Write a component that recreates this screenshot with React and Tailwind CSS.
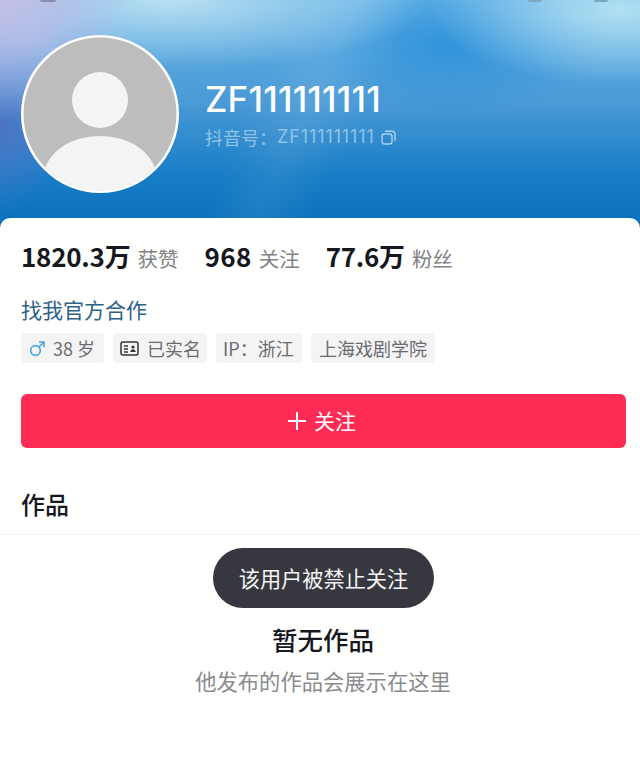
import React from "react";

const cjk = "font-['Noto_Sans_CJK_SC','Noto_Sans',sans-serif]";

const Stat = ({ value, label, className = "tracking-[-0.25px]" }) => (
  <div className="flex items-baseline gap-[7px]">
    <span className={`text-[26px] leading-[32px] font-bold text-[#16181f] ${className}`}>{value}</span>
    <span className="text-[20.5px] leading-[32px] text-[#808287]">{label}</span>
  </div>
);

const Tag = ({ children, className = "" }) => (
  <div className={`h-[30px] flex items-center rounded-[3px] bg-[#f4f4f4] text-[18px] text-[#6a6c71] ${className}`}>
    {children}
  </div>
);

const MaleIcon = () => (
  <svg width="17" height="17" viewBox="0 0 17 17" fill="none" stroke="#4fa8dc" strokeWidth="1.7" strokeLinecap="round" strokeLinejoin="round">
    <circle cx="6.5" cy="10.5" r="4.8" />
    <path d="M10 7 15 2M10.6 2H15V6.4" />
  </svg>
);

const IdCardIcon = () => (
  <svg width="19" height="15" viewBox="0 0 19 15" fill="none" stroke="#33353a" strokeWidth="1.5">
    <rect x="1" y="1" width="17" height="13" rx="2" />
    <path d="M4 5h4M4 8h4M4 11h4" strokeWidth="1.3" />
    <circle cx="13" cy="6" r="1.6" fill="#33353a" stroke="none" />
    <path d="M10.3 11c.3-2 1.3-2.8 2.7-2.8s2.4.8 2.7 2.8z" fill="#33353a" stroke="none" />
  </svg>
);

const CopyIcon = () => (
  <svg width="15" height="15" viewBox="0 0 15 15" fill="none" stroke="#a8d3ee" strokeWidth="1.4">
    <rect x="1" y="4" width="10" height="10" rx="2.5" />
    <path d="M4.5 1.2h6.3c1.9 0 3.2 1.3 3.2 3.2v6" strokeLinecap="round" />
  </svg>
);

const PlusIcon = () => (
  <svg width="18" height="18" viewBox="0 0 18 18" fill="none" stroke="#fff" strokeWidth="2">
    <path d="M0 9h18M9 0v18" />
  </svg>
);

const Avatar = () => (
  <svg width="158" height="158" viewBox="0 0 158 158" className="shrink-0">
    <defs>
      <clipPath id="avatar-clip">
        <circle cx="79" cy="79" r="76.5" />
      </clipPath>
    </defs>
    <circle cx="79" cy="79" r="79" fill="#fff" />
    <circle cx="79" cy="79" r="76.5" fill="#bdbdbd" />
    <g clipPath="url(#avatar-clip)" fill="#f4f4f4">
      <circle cx="79" cy="65" r="28" />
      <ellipse cx="79" cy="142" rx="56" ry="41" />
      <rect x="23" y="142" width="112" height="20" />
    </g>
  </svg>
);

export default function App() {
  return (
    <div className={`w-[640px] h-[771px] overflow-hidden bg-[#fffffd] ${cjk}`}>
      <header className="relative h-[228px] pt-[35px] pl-[21px] flex items-start gap-[26px] bg-[radial-gradient(ellipse_130px_120px_at_0%_0%,#c4c0e8_0%,rgba(190,190,232,0.75)_45%,rgba(190,190,232,0)_100%),radial-gradient(ellipse_70px_90px_at_0px_125px,#4b74c4_0%,rgba(75,116,196,0)_100%),radial-gradient(ellipse_190px_75px_at_620px_10px,#b2e0f2_0%,rgba(178,224,242,0)_100%),linear-gradient(115deg,rgba(255,255,255,0)_40%,rgba(255,255,255,0.07)_48%,rgba(255,255,255,0)_56%),radial-gradient(ellipse_260px_70px_at_170px_0px,#b9dff1_0%,rgba(185,223,241,0)_100%),radial-gradient(ellipse_150px_70px_at_450px_45px,rgba(43,144,218,0.85)_0%,rgba(43,144,218,0)_100%),linear-gradient(180deg,#63b2e6_0%,#4a9ad6_45%,#167cc5_78%,#0a70bb_100%)]">
        <span className="absolute top-0 left-[40px] w-[16px] h-[2px] rounded-b-full bg-[#8a8eaa]" />
        <span className="absolute top-0 left-[528px] w-[14px] h-[2px] rounded-b-full bg-[#7fa6bf]" />
        <span className="absolute top-0 left-[594px] w-[14px] h-[2px] rounded-b-full bg-[#7fa6bf]" />
        <Avatar />
        <div className="pt-[44px]">
          <h1 className="font-['Inter',sans-serif] text-[35px] leading-[40px] font-medium text-white tracking-[0.2px]">ZF111111111</h1>
          <div className="mt-[7px] flex items-center text-[18px] leading-[22px] text-[#8fc3e6]">
            <span>抖音号：</span>
            <span className="font-['Inter',sans-serif] tracking-[0.9px]">ZF111111111</span>
            <span className="ml-[6px]"><CopyIcon /></span>
          </div>
        </div>
      </header>

      <main className="relative -mt-[10px] h-[553px] rounded-t-[10px] bg-[#fffffd]">
        <div className="px-[21px] pt-[22px]">
          <div className="flex items-baseline gap-[26px]">
            <Stat value="1820.3万" label="获赞" />
            <Stat value="968" label="关注" className="tracking-[0.4px]" />
            <Stat value="77.6万" label="粉丝" />
          </div>

          <a className="mt-[21px] block text-[21px] leading-[28px] text-[#2d6289]">找我官方合作</a>

          <div className="mt-[10px] flex items-center gap-[9px]">
            <Tag className="w-[83px] pl-[8px] gap-[7px]">
              <MaleIcon />
              <span>38 岁</span>
            </Tag>
            <Tag className="w-[94px] pl-[7px] gap-[8px]">
              <IdCardIcon />
              <span>已实名</span>
            </Tag>
            <Tag className="w-[86px] pl-[7px]">IP：浙江</Tag>
            <Tag className="w-[124px] pl-[8px]">上海戏剧学院</Tag>
          </div>

          <button className="mt-[31px] w-[605px] h-[54px] pr-[3px] flex items-center justify-center gap-[8px] rounded-[6px] bg-[#fe2c55] text-[21px] text-white">
            <PlusIcon />
            <span>关注</span>
          </button>

          <h2 className="mt-[41px] text-[24px] leading-[30px] font-medium text-[#16181f]">作品</h2>
        </div>

        <div className="mt-[15px] border-t border-[#f4f4f2] pt-[88px] pl-[6px] flex flex-col items-center">
          <div className="text-[25.5px] leading-[32px] font-medium text-[#16181f]">暂无作品</div>
          <div className="mt-[11px] text-[21.3px] leading-[30px] text-[#8a8b90]">他发布的作品会展示在这里</div>
        </div>

        <div className="absolute left-[213px] top-[330px] w-[221px] h-[60px] flex items-center justify-center rounded-[30px] bg-[#37383f] text-[21.2px] text-[#f5f5f5]">
          该用户被禁止关注
        </div>
      </main>
    </div>
  );
}
